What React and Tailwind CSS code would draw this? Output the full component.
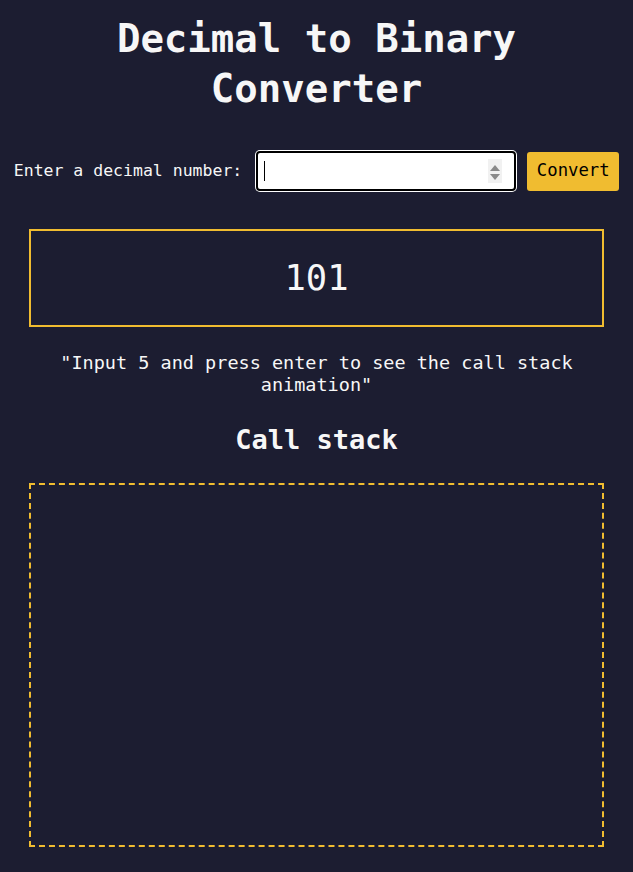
import React from 'react';

function Spinner() {
  return (
    <svg width="14" height="24" viewBox="0 0 14 24" className="shrink-0">
      <rect x="0" y="0" width="14" height="24" fill="#f1f1f1" />
      <path d="M7 6 L12 12 L2 12 Z" fill="#8a8a8a" />
      <path d="M2 15 L12 15 L7 21 Z" fill="#8a8a8a" />
    </svg>
  );
}

export default function App() {
  return (
    <div className="flex min-h-screen flex-col items-center bg-[#1c1d31] px-[29px] pt-[14px] pb-[24px] font-['DejaVu_Sans_Mono','Liberation_Mono',monospace] text-[#f7f7f7]">
      <h1 className="text-center text-[39px] font-bold leading-[50px]">
        Decimal to Binary
        <br />
        Converter
      </h1>

      <div className="mt-[37px] flex shrink-0 items-center whitespace-nowrap">
        <label className="shrink-0 text-[16.5px] leading-[20px]">Enter a decimal number:</label>
        <div className="ml-[14px] flex h-[40px] w-[260px] shrink-0 items-center justify-between rounded-[4px] border-2 border-black bg-white pl-[6px] pr-[12px] ring-1 ring-white">
          <span className="h-[20px] w-px bg-black" />
          <Spinner />
        </div>
        <button
          type="button"
          className="ml-[11px] h-[39px] w-[92px] shrink-0 rounded-[3px] bg-[#f0bc30] text-[17.3px] text-black"
        >
          Convert
        </button>
      </div>

      <div className="mt-[38px] flex h-[98px] w-full items-center justify-center border-2 border-[#f0bc30] text-[35.5px]">
        101
      </div>

      <p className="mt-[25px] px-[20px] text-center text-[18.5px] leading-[22px]">
        "Input 5 and press enter to see the call stack animation"
      </p>

      <h2 className="mt-[28px] text-[27px] font-bold leading-[32px]">Call stack</h2>

      <div className="mt-[27px] h-[364px] w-full border-2 border-dashed border-[#f0bc30]" />
    </div>
  );
}
